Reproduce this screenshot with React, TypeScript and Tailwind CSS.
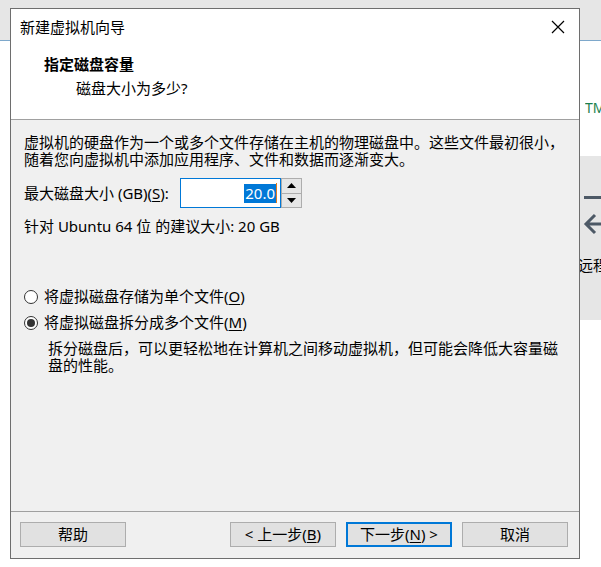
import React from "react";

const F = { fontFamily: '"Segoe UI", "Noto Sans", "Noto Sans CJK SC", sans-serif' };

function U({ c }: { c: string }) {
  return <span className="underline underline-offset-2">{c}</span>;
}

function Btn({ children, primary }: { children: React.ReactNode; primary?: boolean }) {
  return (
    <div
      className={
        "w-[106px] h-[25px] flex items-center justify-center bg-[#e1e1e1] text-[15px] leading-[17px] text-black " +
        (primary ? "border-2 border-[#0078d7]" : "border border-[#adadad]")
      }
    >
      {children}
    </div>
  );
}

function Radio({ checked }: { checked?: boolean }) {
  return (
    <div className="w-[14px] h-[14px] rounded-full border border-[#333333] bg-white flex items-center justify-center">
      {checked && <div className="w-[8px] h-[8px] rounded-full bg-[#333333]" />}
    </div>
  );
}

export default function App() {
  return (
    <div className="relative w-[601px] h-[567px] bg-white overflow-hidden" style={F}>
      <div className="h-[41px] bg-[#e6e6e6] border-b border-[#7ea8cb]" />
      {/* right background fragments */}
      <div className="absolute left-[579px] top-[156px] w-[22px] h-[164px] bg-[#e6e6e6]">
        <div className="absolute left-[5px] top-[40px] w-[20px] h-[3px] bg-[#4d5966]" />
        <svg className="absolute left-[4px] top-[56px]" width="20" height="24" viewBox="0 0 20 24">
          <path d="M12 3 L3 12 L12 21 M3 12 H22" fill="none" stroke="#4d5966" strokeWidth="3" />
        </svg>
        <div className="absolute left-[-1px] top-[101px] w-[23px] overflow-hidden text-[15px] leading-[17px] text-black whitespace-nowrap">远程</div>
      </div>
      <div className="absolute left-[585px] top-[100px] w-[16px] overflow-hidden text-[14px] leading-[16px] text-[#1b7f4d] whitespace-nowrap">TM</div>
      <div className="absolute left-[577px] top-[104px] w-[4px] h-[10px] rounded-full border-l-2 border-[#1b7f4d]" />

      {/* dialog */}
      <div className="absolute left-[10px] top-[8px] w-[570px] h-[551px] border border-[#6e6e6e] bg-[#f0f0f0] flex flex-col">
        <div className="h-[36px] bg-white flex items-center pl-[9px] pr-[14px] justify-between">
          <span className="text-[15px] leading-[17px] text-black">新建虚拟机向导</span>
          <svg width="14" height="14" viewBox="0 0 14 14">
            <path d="M1 1 L13 13 M13 1 L1 13" stroke="#000" strokeWidth="1.2" />
          </svg>
        </div>
        <div className="h-[75px] bg-white border-b border-[#a0a0a0] pt-[11px]">
          <div className="pl-[33px] text-[15px] leading-[17px] font-bold text-black">指定磁盘容量</div>
          <div className="pl-[65px] mt-[7px] text-[15px] leading-[17px] text-black">磁盘大小为多少?</div>
        </div>
        <div className="flex-1 pl-[13px] pt-[14px] text-[15px] leading-[17px] text-black">
          <div>虚拟机的硬盘作为一个或多个文件存储在主机的物理磁盘中。这些文件最初很小，</div>
          <div>随着您向虚拟机中添加应用程序、文件和数据而逐渐变大。</div>
          <div className="flex items-center mt-[10px] h-[30px]">
            <span className="w-[156px]">
              最大磁盘大小 (GB)(<U c="S" />):
            </span>
            <div className="w-[101px] h-[30px] border border-[#0078d7] bg-white flex items-center justify-end pr-[3px]">
              <span className="bg-[#0078d7] text-white leading-[19px] px-[1px]">20.0</span>
              <span className="w-[1px] h-[20px] bg-[#e07a1f]" />
            </div>
            <div className="w-[21px] h-[30px] border border-[#adadad] bg-[#e6e6e6] flex flex-col">
              <div className="flex-1 border-b border-[#adadad] flex items-center justify-center">
                <svg width="9" height="5" viewBox="0 0 9 5"><path d="M0 5 L4.5 0 L9 5 Z" fill="#000" /></svg>
              </div>
              <div className="flex-1 flex items-center justify-center">
                <svg width="9" height="5" viewBox="0 0 9 5"><path d="M0 0 L4.5 5 L9 0 Z" fill="#000" /></svg>
              </div>
            </div>
          </div>
          <div className="mt-[10px]">针对 Ubuntu 64 位 的建议大小: 20 GB</div>
          <div className="flex items-center mt-[53px] gap-[6px]">
            <Radio />
            <span>
              将虚拟磁盘存储为单个文件(<U c="O" />)
            </span>
          </div>
          <div className="flex items-center mt-[9px] gap-[6px]">
            <Radio checked />
            <span>
              将虚拟磁盘拆分成多个文件(<U c="M" />)
            </span>
          </div>
          <div className="pl-[24px] mt-[9px] whitespace-nowrap">
            拆分磁盘后，可以更轻松地在计算机之间移动虚拟机，但可能会降低大容量磁
            <br />
            盘的性能。
          </div>
        </div>
        <div className="h-[47px] border-t border-[#a0a0a0] pt-[10px] pl-[9px] pr-[11px] flex items-start">
          <Btn>帮助</Btn>
          <div className="flex-1" />
          <div className="flex gap-[10px]">
            <Btn>
              &lt; 上一步(<U c="B" />)
            </Btn>
            <Btn primary>
              下一步(<U c="N" />) &gt;
            </Btn>
            <Btn>取消</Btn>
          </div>
        </div>
      </div>
    </div>
  );
}
